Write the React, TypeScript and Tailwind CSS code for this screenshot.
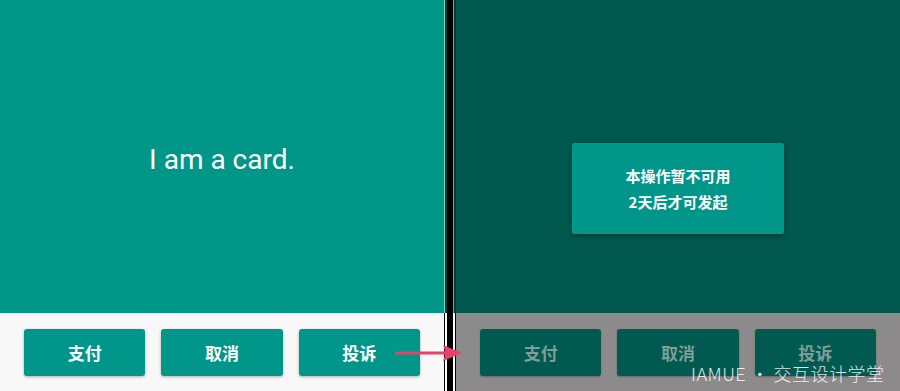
import React from "react";

const cjk = { fontFamily: '"Noto Sans CJK SC", "Noto Sans", sans-serif' };

function Buttons({ dark }: { dark?: boolean }) {
  const labels = ["支付", "取消", "投诉"];
  return (
    <div className="flex flex-1 items-start gap-4 px-6 pt-4">
      {labels.map((l) => (
        <div
          key={l}
          style={cjk}
          className={
            dark
              ? "flex h-[47px] flex-1 items-center justify-center rounded-[3px] bg-[#005a4f] text-[17px] font-bold text-[#7f9e98] shadow-[0_1px_2px_rgba(0,0,0,0.25)]"
              : "flex h-[47px] flex-1 items-center justify-center rounded-[3px] bg-[#00978a] text-[17px] font-bold text-white shadow-[0_1px_3px_rgba(0,0,0,0.3)]"
          }
        >
          {l}
        </div>
      ))}
    </div>
  );
}

export default function App() {
  return (
    <div className="relative flex h-[391px] w-[900px] overflow-hidden bg-white">
      {/* left */}
      <div className="flex w-[444px] flex-col">
        <div className="flex h-[313px] items-center justify-center bg-[#009688] pt-[6px]">
          <span
            className="text-[28px] text-white"
            style={{ fontFamily: 'Roboto, "Liberation Sans", sans-serif' }}
          >
            I am a card.
          </span>
        </div>
        <div className="flex flex-1 bg-[#f8f8f8]">
          <Buttons />
        </div>
      </div>
      {/* divider */}
      <div className="flex w-[12px] flex-col">
        <div className="flex h-[313px]">
          <div className="w-px bg-[#7fcfc6]" />
          <div className="w-[2px] bg-[#0b3f38]" />
          <div className="w-[6px] bg-black" />
          <div className="w-px bg-[#5fb0a6]" />
          <div className="w-[2px] bg-[#0a3a34]" />
        </div>
        <div className="flex flex-1">
          <div className="w-px bg-black" />
          <div className="w-[2px] bg-white" />
          <div className="w-[6px] bg-black" />
          <div className="w-[2px] bg-white" />
          <div className="w-px bg-black" />
        </div>
      </div>
      {/* right */}
      <div className="flex flex-1 flex-col">
        <div className="flex h-[313px] flex-col items-center bg-[#00574d] pt-[143px]">
          <div
            style={cjk}
            className="flex h-[91px] w-[212px] flex-col items-center justify-center rounded-[2px] bg-[#00968a] text-[15px] font-bold leading-[26px] text-white shadow-[0_2px_4px_rgba(0,0,0,0.35)]"
          >
            <span>本操作暂不可用</span>
            <span>2天后才可发起</span>
          </div>
        </div>
        <div className="flex flex-1 bg-[#8c8a8a]">
          <Buttons dark />
        </div>
      </div>
      {/* arrow */}
      <svg
        className="absolute left-[393px] top-[342px]"
        width="72"
        height="22"
        viewBox="0 0 72 22"
      >
        <line x1="2" y1="11" x2="54" y2="11" stroke="#e8416a" strokeWidth="3" />
        <path d="M50 3 L69 11 L50 19 Q54 11 50 3 Z" fill="#e8416a" />
      </svg>
      {/* watermark */}
      <div
        style={cjk}
        className="absolute left-[691px] top-[360px] text-[18px] font-light tracking-[0.5px] text-white/85"
      >
        IAMUE · 交互设计学堂
      </div>
    </div>
  );
}
